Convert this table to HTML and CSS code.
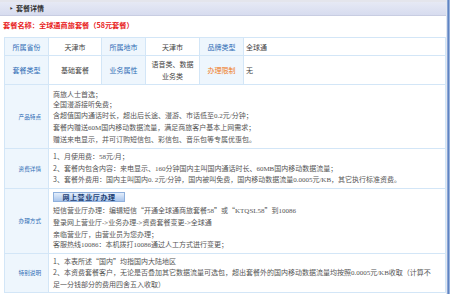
FILE: index.html
```html
<!DOCTYPE html>
<html lang="zh-CN">
    <head>
        <meta charset="UTF-8">
        <title>套餐详情</title>
        <link rel="stylesheet" href="styles.css">
    </head>
    <body>
        <div class="page">
            <div class="bar"><span class="arrow">&#8227;</span>套餐详情</div>
            <div class="title">套餐名称：全球通商旅套餐（58元套餐）</div>

            <table class="info">
                <tr class="row-a">
                    <td class="label">所属省份</td>
                    <td class="value c2">天津市</td>
                    <td class="label">所属地市</td>
                    <td class="value c4">天津市</td>
                    <td class="label">品牌类型</td>
                    <td class="value left">全球通</td>
                </tr>
                <tr class="row-b">
                    <td class="label">套餐类型</td>
                    <td class="value">基础套餐</td>
                    <td class="label">业务属性</td>
                    <td class="value">语音类、数据<br>业务类</td>
                    <td class="label warn">办理限制</td>
                    <td class="value left">无</td>
                </tr>
            </table>

            <table class="detail">
                <tr class="r3">
                    <td class="label">产品特点</td>
                    <td class="text">
                        商旅人士首选；<br>
                        全国漫游接听免费；<br>
                        含超值国内通话时长，超出后长途、漫游、市话低至<span class="en">0.2</span>元<span class="en">/</span>分钟；<br>
                        套餐内赠送<span class="en">60M</span>国内移动数据流量，满足商旅客户基本上网需求；<br>
                        赠送来电显示，并可订购短信包、彩信包、音乐包等专属优惠包。
                    </td>
                </tr>
                <tr class="r4">
                    <td class="label">资费详情</td>
                    <td class="text">
                        1、月使用费：<span class="en">58</span>元<span class="en">/</span>月；<br>
                        2、套餐内包含内容：来电显示、<span class="en">160</span>分钟国内主叫国内通话时长、<span class="en">60MB</span>国内移动数据流量；<br>
                        3、套餐外费用：国内主叫国内<span class="en">0.</span> <span class="en">2</span>元<span class="en">/</span>分钟，国内被叫免费，国内移动数据流量<span class="en">0.0005</span>元<span class="en">/KB</span>，其它执行标准资费。
                    </td>
                </tr>
                <tr class="r5">
                    <td class="label">办理方式</td>
                    <td class="text">
                        <div class="btn">网上营业厅办理</div>
                        短信营业厅办理：编辑短信“开通全球通商旅套餐<span class="en">58</span>”或“<span class="en">KTQSL58</span>”到<span class="en">10086</span><br>
                        登录网上营业厅<span class="en">-&gt;</span>业务办理<span class="en">-&gt;</span>资费套餐变更<span class="en">-&gt;</span>全球通<br>
                        亲临营业厅，由营业员为您办理；<br>
                        客服热线<span class="en">10086</span>：本机拨打<span class="en">10086</span>通过人工方式进行变更；
                    </td>
                </tr>
                <tr class="r6">
                    <td class="label">特别说明</td>
                    <td class="text">
                        1、本表所述“国内”均指国内大陆地区<br>
                        2、本资费套餐客户，无论是否叠加其它数据流量可选包，超出套餐外的国内移动数据流量均按照<span class="en">0.0005</span>元<span class="en">/KB</span>收取（计算不<br>足一分钱部分的费用四舍五入收取）
                    </td>
                </tr>
            </table>
        </div>
        <div class="edge"></div>
    </body>
</html>
```

FILE: styles.css
```css
body {
    margin: 0;
    display: flex;
    font-family: "Noto Sans CJK SC", sans-serif;
    font-size: 7px;
    color: #444;
    background-color: white;
}

.page {
    width: 446px;
}

.edge {
    width: 4px;
    height: 294px;
    border-left: 1px solid #e2e7f0;
    background: linear-gradient(to right, #9fb6de, #5f84c2, #b7c9e8);
}

.bar {
    height: 13px;
    line-height: 13px;
    border-top: 2px solid #e4e5ec;
    border-bottom: 1px solid #c8cde2;
    background: linear-gradient(#e6e9f5, #d7dcef);
    font-weight: bold;
    color: #333;
    padding-left: 10px;
}

.arrow {
    margin-right: 3px;
}

.title {
    padding: 3px 3px 0;
    line-height: 12px;
    margin-bottom: 6px;
    color: #e8211c;
    font-weight: bold;
    font-size: 7.2px;
}

table {
    border-collapse: collapse;
    margin-left: 4px;
    width: 442px;
    table-layout: fixed;
}

td {
    border: 1px solid #d3e6f7;
    padding: 0;
}

.label {
    background-color: #eef6fd;
    color: #2f6db5;
    text-align: center;
    width: 43px;
}

.warn {
    color: #f07a22;
}

.info .value {
    text-align: center;
    color: #444;
}

.info .c2 {
    width: 52px;
}

.info .c4 {
    width: 53px;
}

.info .left {
    text-align: left;
    padding-left: 2px;
}

.info .row-a td {
    height: 17px;
}

.info .row-b td {
    height: 28px;
    line-height: 12px;
}

.detail tr:first-child td {
    border-top: none;
}

.detail .label {
    font-size: 5.6px;
    text-align: right;
    padding-right: 7px;
    width: 36px;
}

.detail .text {
    padding-left: 4px;
    line-height: 10.7px;
    color: #555;
}

.en {
    font-family: "Liberation Serif", serif;
    font-size: 7px;
}

.detail .r3 td {
    height: 63px;
}

.detail .r4 td {
    height: 39px;
}

.detail .r5 td {
    height: 64px;
}

.detail .r6 td {
    height: 38px;
}

.btn {
    width: 70px;
    height: 8px;
    line-height: 8px;
    margin: 1px 0 3px;
    border: 1px solid #8fb0dc;
    background: linear-gradient(#e4eefb, #a9c5ec);
    color: #1d3f74;
    font-weight: bold;
    text-align: center;
    letter-spacing: 0.6px;
}
```
